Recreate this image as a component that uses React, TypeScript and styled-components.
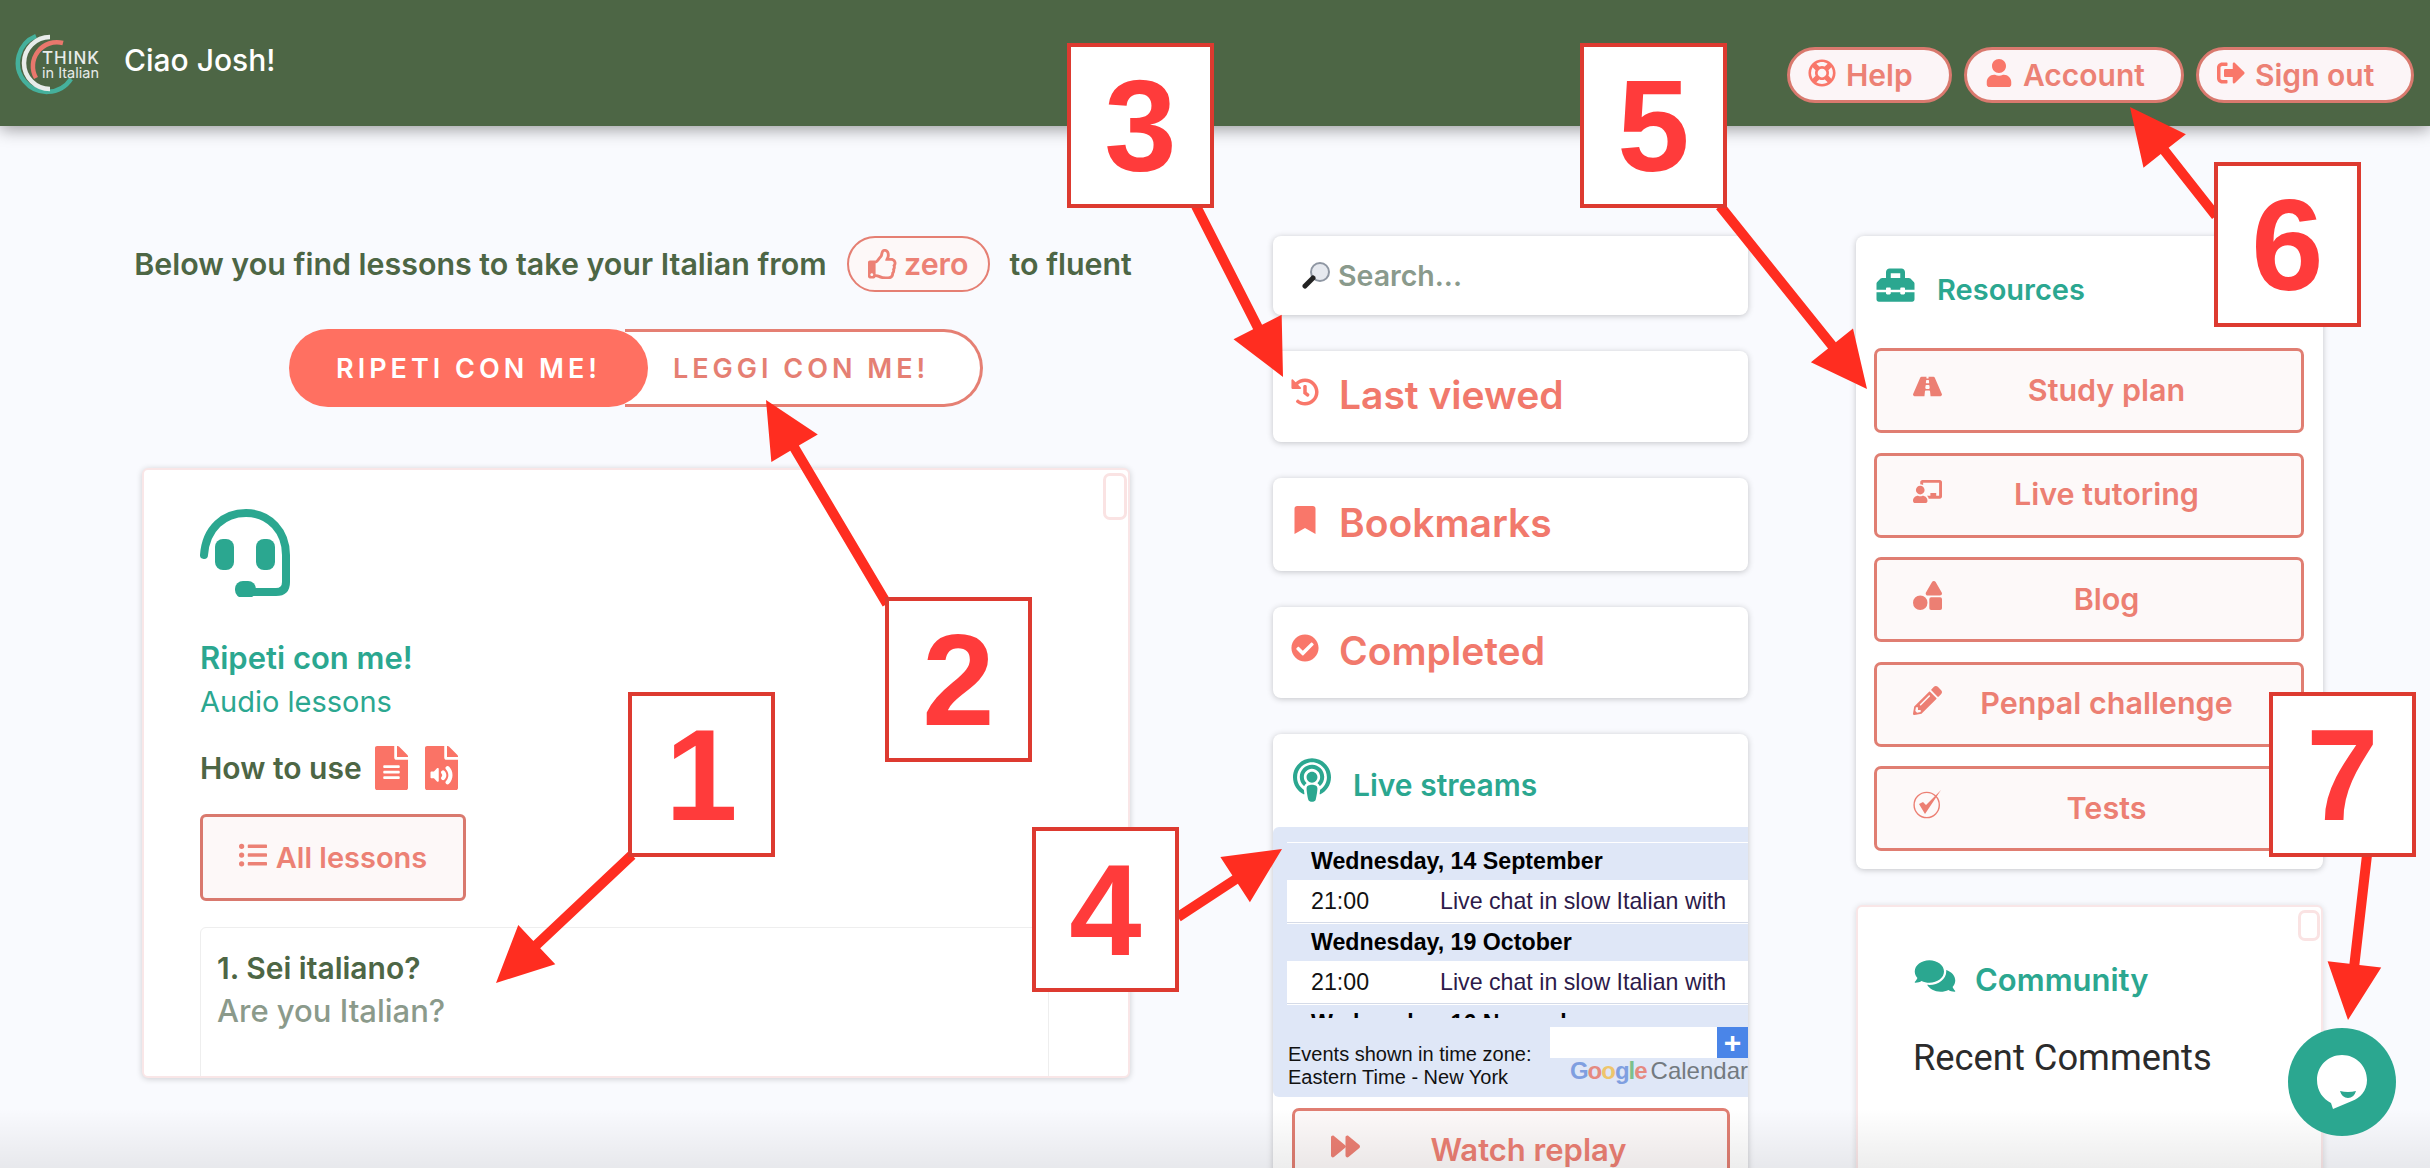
import styled, { createGlobalStyle } from "styled-components";
import {
  FaBookmark,
  FaChalkboardTeacher,
  FaCheckCircle,
  FaComments,
  FaFileAlt,
  FaFileAudio,
  FaForward,
  FaHistory,
  FaListUl,
  FaPencilAlt,
  FaPodcast,
  FaRegLifeRing,
  FaRegThumbsUp,
  FaRoad,
  FaShapes,
  FaSignOutAlt,
  FaToolbox,
  FaUser,
} from "react-icons/fa";

const GlobalStyle = createGlobalStyle`
  html, body {
    margin: 0;
    padding: 0;
    background: #f9fafe;
    font-family: Inter, "Liberation Sans", sans-serif;
  }
  * {
    box-sizing: border-box;
  }
`;

const Page = styled.div`
  position: relative;
  width: 2430px;
  height: 1168px;
  overflow: hidden;
  background: #f9fafe;
`;

const Header = styled.header`
  display: flex;
  justify-content: space-between;
  align-items: flex-start;
  height: 126px;
  background: #4d6645;
  box-shadow: 0 3px 16px rgba(0, 0, 0, 0.4);
  position: relative;
  z-index: 1;
`;

const Brand = styled.div`
  display: flex;
  align-items: flex-start;
  gap: 20px;
  padding: 30px 0 0 14px;
`;

const Greeting = styled.div`
  color: #ffffff;
  font-size: 30px;
  font-weight: 500;
  line-height: 36px;
  margin-top: 12px;
`;

const HeaderNav = styled.nav`
  display: flex;
  gap: 12px;
  padding: 47px 16px 0 0;
`;

const NavPill = styled.div<{ $width: number }>`
  display: flex;
  align-items: center;
  gap: 10px;
  width: ${(p) => p.$width}px;
  height: 56px;
  padding-left: 18px;
  border: 3px solid #d9796e;
  border-radius: 28px;
  background: #fcf5f7;
  color: #ec8175;
  font-size: 30px;
  font-weight: 600;
  svg {
    flex: none;
    font-size: 28px;
    color: #f9776a;
    margin-top: -4px;
  }
`;

const Main = styled.main`
  display: flex;
  align-items: flex-start;
  padding: 110px 0 0 142px;
`;

const LeftColumn = styled.section`
  display: flex;
  flex-direction: column;
  align-items: center;
  width: 988px;
  margin-right: 143px;
`;

const Tagline = styled.div`
  display: flex;
  align-items: center;
  gap: 20px;
  height: 56px;
  margin-left: -6px;
  color: #4d6645;
  font-size: 30.4px;
  font-weight: 600;
  white-space: nowrap;
`;

const ZeroPill = styled.span`
  display: inline-flex;
  align-items: center;
  justify-content: center;
  gap: 6px;
  width: 143px;
  height: 56px;
  border: 2px solid #e57f73;
  border-radius: 28px;
  color: #ec8175;
  background: #fdf8f8;
`;

const Toggle = styled.div`
  display: flex;
  width: 694px;
  height: 78px;
  margin-top: 37px;
`;

const ToggleOn = styled.div`
  position: relative;
  z-index: 1;
  display: flex;
  align-items: center;
  justify-content: center;
  width: 359px;
  border-radius: 39px;
  background: #ff7061;
  color: #ffffff;
  font-size: 27px;
  font-weight: 600;
  letter-spacing: 4px;
`;

const ToggleOff = styled.div`
  display: flex;
  align-items: center;
  width: 358px;
  margin-left: -23px;
  padding-left: 48px;
  border: 3px solid #e57f73;
  border-left: none;
  border-radius: 0 39px 39px 0;
  background: #ffffff;
  color: #e57f73;
  font-size: 27px;
  font-weight: 600;
  letter-spacing: 4px;
`;

const LessonCard = styled.div`
  position: relative;
  width: 988px;
  height: 610px;
  margin-top: 61px;
  padding: 35px 56px 0;
  overflow: hidden;
  background: #ffffff;
  border: 2px solid #f9e6e7;
  border-radius: 6px;
  box-shadow: 0 1px 6px rgba(0, 0, 0, 0.18);
`;

const CornerBox = styled.div<{ $w: number; $h: number }>`
  position: absolute;
  top: 3px;
  right: 1px;
  width: ${(p) => p.$w}px;
  height: ${(p) => p.$h}px;
  border: 3px solid #fae3e3;
  border-radius: 7px;
  background: #ffffff;
`;

const CardTitle = styled.div`
  margin-top: 35px;
  color: #2ba790;
  font-size: 31px;
  font-weight: 600;
  line-height: 44px;
`;

const CardSub = styled.div`
  color: #2ba790;
  font-size: 29px;
  font-weight: 400;
  line-height: 44px;
`;

const HowTo = styled.div`
  display: flex;
  align-items: center;
  gap: 13px;
  height: 44px;
  margin-top: 22px;
  color: #4d6645;
  font-size: 30px;
  font-weight: 600;
  svg {
    width: 33px;
    height: 44px;
    color: #fa7366;
  }
`;

const HowToIcons = styled.span`
  display: flex;
  gap: 17px;
`;

const AllLessons = styled.div`
  display: flex;
  align-items: center;
  justify-content: center;
  gap: 9px;
  width: 266px;
  height: 87px;
  margin-top: 24px;
  border: 3px solid #d9796e;
  border-radius: 6px;
  background: #fdf8f8;
  color: #ec8175;
  font-size: 29px;
  font-weight: 600;
  svg {
    font-size: 28px;
    margin-top: -6px;
  }
`;

const LessonRow = styled.div`
  width: 849px;
  height: 200px;
  margin-top: 26px;
  padding: 19px 16px 0;
  border: 1px solid #eeeeee;
  border-radius: 6px;
`;

const LessonName = styled.div`
  color: #4d6645;
  font-size: 30px;
  font-weight: 600;
  line-height: 42px;
`;

const LessonGloss = styled.div`
  color: #8b9a8b;
  font-size: 31px;
  font-weight: 500;
  line-height: 44px;
`;

const MiddleColumn = styled.section`
  display: flex;
  flex-direction: column;
  gap: 36px;
  width: 475px;
  margin-right: 108px;
`;

const SideCard = styled.div<{ $h?: number }>`
  ${(p) => (p.$h ? `height: ${p.$h}px;` : "")}
  background: #ffffff;
  border-radius: 8px;
  box-shadow: 0 1px 6px rgba(0, 0, 0, 0.22);
`;

const SearchBar = styled(SideCard)`
  display: flex;
  align-items: center;
  gap: 8px;
  padding-left: 29px;
  color: #8a9a8c;
  font-size: 28.5px;
  font-weight: 600;
`;

const ShortcutCard = styled(SideCard)`
  display: flex;
  align-items: center;
  padding: 0 0 4px 18px;
  color: #f1796c;
  font-size: 39px;
  font-weight: 600;
  svg {
    flex: none;
    width: 28px;
    height: 28px;
    margin: -6px 20px 0 0;
    color: #f9776a;
  }
`;

const PanelHead = styled.div`
  display: flex;
  align-items: center;
  color: #2ba790;
  font-weight: 600;
`;

const LiveHead = styled(PanelHead)`
  height: 93px;
  padding: 8px 0 0 20px;
  gap: 22px;
  font-size: 30px;
  svg {
    width: 38px;
    height: 44px;
    margin-top: -10px;
  }
`;

const CalendarFrame = styled.div`
  height: 270px;
  padding: 15px 0 0 14px;
  background: #dfe7f7;
  border-radius: 6px 0 0 6px;
  font-family: "Liberation Sans", Arial, sans-serif;
`;

const EventList = styled.div`
  height: 176px;
  overflow: hidden;
`;

const DateRow = styled.div`
  display: flex;
  align-items: center;
  height: 38px;
  padding-left: 24px;
  border-top: 1px solid #ffffff;
  color: #000000;
  font-size: 23.2px;
  font-weight: 700;
  white-space: nowrap;
`;

const EventRow = styled.div`
  display: flex;
  align-items: center;
  height: 43px;
  padding-left: 24px;
  background: #ffffff;
  border-bottom: 1px solid #d5dbe8;
  font-size: 23.2px;
  white-space: nowrap;
`;

const EventTime = styled.span`
  width: 129px;
  color: #111111;
`;

const EventName = styled.span`
  color: #2d1a4a;
`;

const CalendarFoot = styled.div`
  display: flex;
  justify-content: space-between;
  padding-left: 1px;
`;

const TimeZone = styled.div`
  margin-top: 25px;
  color: #111111;
  font-size: 20px;
  line-height: 23px;
  white-space: nowrap;
`;

const SubscribeBlock = styled.div`
  width: 198px;
  margin-top: 9px;
`;

const SubscribeBar = styled.div`
  display: flex;
  justify-content: flex-end;
  height: 31px;
  background: #ffffff;
`;

const PlusButton = styled.div`
  display: flex;
  align-items: center;
  justify-content: center;
  width: 31px;
  background: #4a85e8;
  color: #ffffff;
  font-size: 30px;
  font-weight: 700;
  line-height: 1;
`;

const GoogleMark = styled.div`
  display: flex;
  justify-content: flex-end;
  gap: 4px;
  font-size: 24px;
  line-height: 26px;
  color: #737a80;
  white-space: nowrap;
`;

const GLetter = styled.span<{ $c: string }>`
  color: ${(p) => p.$c};
  font-weight: 700;
  letter-spacing: -1px;
`;

const LinkButton = styled.div`
  display: flex;
  align-items: center;
  height: 85px;
  padding: 0 30px 0 36px;
  border: 3px solid #e07e72;
  border-radius: 7px;
  background: #fdf9f9;
  color: #ec7f73;
  font-size: 30.5px;
  font-weight: 600;
  svg {
    flex: none;
    width: 29px;
    height: 29px;
    margin-top: -8px;
  }
`;

const LinkLabel = styled.span`
  flex: 1;
  margin-top: -3px;
  text-align: center;
`;

const ReplayButton = styled(LinkButton)`
  margin: 11px 18px 0 19px;
  font-size: 31px;
`;

const RightColumn = styled.section`
  display: flex;
  flex-direction: column;
  gap: 36px;
  width: 467px;
`;

const ResourcesCard = styled(SideCard)`
  height: 633px;
  padding: 0 19px 0 18px;
`;

const ResourcesHead = styled(PanelHead)`
  height: 106px;
  margin-bottom: 6px;
  gap: 20px;
  font-size: 29px;
  svg {
    width: 43px;
    height: 38px;
    margin-top: -8px;
  }
`;

const ResourceList = styled.div`
  display: flex;
  flex-direction: column;
  gap: 19.5px;
`;

const CommunityCard = styled.div`
  position: relative;
  height: 300px;
  padding: 54px 0 0 55px;
  background: #ffffff;
  border: 2px solid #f9e6e7;
  border-radius: 6px;
  box-shadow: 0 1px 6px rgba(0, 0, 0, 0.14);
`;

const CommunityHead = styled(PanelHead)`
  gap: 18px;
  font-size: 31px;
  svg {
    width: 44px;
    height: 36px;
    margin-top: -8px;
  }
`;

const RecentComments = styled.div`
  margin-top: 38px;
  color: #2b2b2b;
  font-family: Roboto, "Liberation Sans", sans-serif;
  font-size: 36.3px;
  line-height: 44px;
`;

const ChatBubble = styled.div`
  position: absolute;
  left: 2288px;
  top: 1028px;
  z-index: 3;
  display: flex;
  align-items: center;
  justify-content: center;
  width: 108px;
  height: 108px;
  border-radius: 50%;
  background: #2ba790;
`;

const BottomFade = styled.div`
  position: absolute;
  left: 0;
  right: 0;
  bottom: 0;
  height: 60px;
  z-index: 2;
  pointer-events: none;
  background: linear-gradient(rgba(0, 0, 0, 0), rgba(0, 0, 0, 0.07));
`;

const CalloutBox = styled.div<{ $x: number; $y: number }>`
  position: absolute;
  left: ${(p) => p.$x}px;
  top: ${(p) => p.$y}px;
  z-index: 5;
  display: flex;
  align-items: center;
  justify-content: center;
  width: 147px;
  height: 165px;
  border: 4px solid #dd3a30;
  background: #ffffff;
  color: #ff3b3b;
  font-family: "Liberation Sans", Arial, sans-serif;
  font-size: 130px;
  font-weight: 700;
  line-height: 1;
`;

const ArrowLayer = styled.svg`
  position: absolute;
  left: 0;
  top: 0;
  z-index: 4;
  pointer-events: none;
`;

type Point = [number, number];

function arrowPoints(tail: Point, tip: Point): string {
  const dx = tip[0] - tail[0];
  const dy = tip[1] - tail[1];
  const len = Math.hypot(dx, dy);
  const ux = dx / len;
  const uy = dy / len;
  const nx = -uy;
  const ny = ux;
  const headLen = 56;
  const headHalf = 27;
  const shaftHalf = 5;
  const bx = tip[0] - ux * headLen;
  const by = tip[1] - uy * headLen;
  const pts: Point[] = [
    [tail[0] + nx * shaftHalf, tail[1] + ny * shaftHalf],
    [bx + nx * shaftHalf, by + ny * shaftHalf],
    [bx + nx * headHalf, by + ny * headHalf],
    tip,
    [bx - nx * headHalf, by - ny * headHalf],
    [bx - nx * shaftHalf, by - ny * shaftHalf],
    [tail[0] - nx * shaftHalf, tail[1] - ny * shaftHalf],
  ];
  return pts.map((p) => p.join(",")).join(" ");
}

const callouts = [
  { n: 1, x: 628, y: 692 },
  { n: 2, x: 885, y: 597 },
  { n: 3, x: 1067, y: 43 },
  { n: 4, x: 1032, y: 827 },
  { n: 5, x: 1580, y: 43 },
  { n: 6, x: 2214, y: 162 },
  { n: 7, x: 2269, y: 692 },
];

const arrows: { tail: Point; tip: Point }[] = [
  { tail: [632, 855], tip: [496, 983] },
  { tail: [887, 604], tip: [766, 400] },
  { tail: [1196, 206], tip: [1283, 377] },
  { tail: [1178, 917], tip: [1282, 849] },
  { tail: [1720, 206], tip: [1867, 389] },
  { tail: [2216, 216], tip: [2130, 107] },
  { tail: [2367, 855], tip: [2348, 1020] },
];

function TestsIcon() {
  return (
    <svg viewBox="0 0 29 29" fill="none">
      <circle cx="13.7" cy="15" r="12.6" stroke="currentColor" strokeWidth="1.4" />
      <path d="M6 14 L12 24 L28 0 L13 15 L10 12 Z" fill="currentColor" />
    </svg>
  );
}

const resources = [
  { label: "Study plan", icon: <FaRoad /> },
  { label: "Live tutoring", icon: <FaChalkboardTeacher /> },
  { label: "Blog", icon: <FaShapes /> },
  { label: "Penpal challenge", icon: <FaPencilAlt /> },
  { label: "Tests", icon: <TestsIcon /> },
];

function Logo() {
  return (
    <svg width="90" height="66" viewBox="0 0 90 66" fill="none">
      <path d="M57 49 A29 29 0 1 1 22 6" stroke="#45b09c" strokeWidth="4.5" />
      <path d="M36 59 A26 26 0 1 1 36 7" stroke="#e8ecea" strokeWidth="4.5" />
      <path d="M22 48 A24 24 0 0 1 49 13" stroke="#e9776c" strokeWidth="4.5" />
      <text x="28" y="34" fill="#e8ecea" fontFamily="Inter, sans-serif" fontSize="17" fontWeight="500" letterSpacing="1">
        THINK
      </text>
      <text x="28" y="48" fill="#e8ecea" fontFamily="Inter, sans-serif" fontSize="14.5" fontWeight="400">
        in Italian
      </text>
    </svg>
  );
}

function HeadsetIcon() {
  return (
    <svg width="92" height="92" viewBox="10 5 92 92" fill="none">
      <path
        d="M14 55 C16 28 34 13 56 13 C80 13 96 32 96 55 L96 82 Q96 92 86 92 L60 92"
        stroke="#2ba790"
        strokeWidth="8"
        strokeLinecap="round"
      />
      <rect x="25" y="39" width="19" height="31" rx="8" fill="#2ba790" />
      <rect x="66" y="39" width="19" height="31" rx="8" fill="#2ba790" />
      <rect x="45" y="81" width="21" height="17" rx="8" fill="#2ba790" />
    </svg>
  );
}

function MagnifierIcon() {
  return (
    <svg width="28" height="30" viewBox="0 0 28 30">
      <circle cx="18" cy="11" r="9" fill="#e6e9ef" stroke="#8f97a3" strokeWidth="2" />
      <path d="M11 17 L3 25" stroke="#222222" strokeWidth="5" strokeLinecap="round" />
    </svg>
  );
}

function ChatIcon() {
  return (
    <svg width="52" height="56" viewBox="0 0 52 56">
      <path
        d="M26 1 C40 1 51 12 51 26 C51 37 44 44 36 47 L17 55 L15 49 C7 45 1 37 1 26 C1 12 12 1 26 1 Z"
        fill="#ffffff"
      />
      <path d="M24 37 Q32 39 40 37 Q38 44 32 44 Q26 44 24 37 Z" fill="#2ba790" />
    </svg>
  );
}

export default function App() {
  return (
    <Page>
      <GlobalStyle />
      <Header>
        <Brand>
          <Logo />
          <Greeting>Ciao Josh!</Greeting>
        </Brand>
        <HeaderNav>
          <NavPill $width={165}>
            <FaRegLifeRing />
            Help
          </NavPill>
          <NavPill $width={220}>
            <FaUser />
            Account
          </NavPill>
          <NavPill $width={218}>
            <FaSignOutAlt />
            Sign out
          </NavPill>
        </HeaderNav>
      </Header>

      <Main>
        <LeftColumn>
          <Tagline>
            <span>Below you find lessons to take your Italian from</span>
            <ZeroPill>
              <FaRegThumbsUp />
              zero
            </ZeroPill>
            <span>to fluent</span>
          </Tagline>
          <Toggle>
            <ToggleOn>RIPETI CON ME!</ToggleOn>
            <ToggleOff>LEGGI CON ME!</ToggleOff>
          </Toggle>
          <LessonCard>
            <CornerBox $w={24} $h={47} />
            <HeadsetIcon />
            <CardTitle>Ripeti con me!</CardTitle>
            <CardSub>Audio lessons</CardSub>
            <HowTo>
              How to use
              <HowToIcons>
                <FaFileAlt />
                <FaFileAudio />
              </HowToIcons>
            </HowTo>
            <AllLessons>
              <FaListUl />
              All lessons
            </AllLessons>
            <LessonRow>
              <LessonName>1. Sei italiano?</LessonName>
              <LessonGloss>Are you Italian?</LessonGloss>
            </LessonRow>
          </LessonCard>
        </LeftColumn>

        <MiddleColumn>
          <SearchBar $h={79}>
            <MagnifierIcon />
            Search...
          </SearchBar>
          <ShortcutCard $h={91}>
            <FaHistory />
            Last viewed
          </ShortcutCard>
          <ShortcutCard $h={93}>
            <FaBookmark />
            Bookmarks
          </ShortcutCard>
          <ShortcutCard $h={91}>
            <FaCheckCircle />
            Completed
          </ShortcutCard>
          <SideCard>
            <LiveHead>
              <FaPodcast />
              Live streams
            </LiveHead>
            <CalendarFrame>
              <EventList>
                <DateRow>Wednesday, 14 September</DateRow>
                <EventRow>
                  <EventTime>21:00</EventTime>
                  <EventName>Live chat in slow Italian with</EventName>
                </EventRow>
                <DateRow>Wednesday, 19 October</DateRow>
                <EventRow>
                  <EventTime>21:00</EventTime>
                  <EventName>Live chat in slow Italian with</EventName>
                </EventRow>
                <DateRow>Wednesday, 16 November</DateRow>
              </EventList>
              <CalendarFoot>
                <TimeZone>
                  Events shown in time zone:
                  <br />
                  Eastern Time - New York
                </TimeZone>
                <SubscribeBlock>
                  <SubscribeBar>
                    <PlusButton>+</PlusButton>
                  </SubscribeBar>
                  <GoogleMark>
                    <span>
                      <GLetter $c="#7f9fe0">G</GLetter>
                      <GLetter $c="#e58a80">o</GLetter>
                      <GLetter $c="#eec56c">o</GLetter>
                      <GLetter $c="#7f9fe0">g</GLetter>
                      <GLetter $c="#7cc08c">l</GLetter>
                      <GLetter $c="#e58a80">e</GLetter>
                    </span>
                    <span>Calendar</span>
                  </GoogleMark>
                </SubscribeBlock>
              </CalendarFoot>
            </CalendarFrame>
            <ReplayButton>
              <FaForward />
              <LinkLabel>Watch replay</LinkLabel>
            </ReplayButton>
          </SideCard>
        </MiddleColumn>

        <RightColumn>
          <ResourcesCard>
            <ResourcesHead>
              <FaToolbox />
              Resources
            </ResourcesHead>
            <ResourceList>
              {resources.map((r) => (
                <LinkButton key={r.label}>
                  {r.icon}
                  <LinkLabel>{r.label}</LinkLabel>
                </LinkButton>
              ))}
            </ResourceList>
          </ResourcesCard>
          <CommunityCard>
            <CornerBox $w={22} $h={31} />
            <CommunityHead>
              <FaComments />
              Community
            </CommunityHead>
            <RecentComments>Recent Comments</RecentComments>
          </CommunityCard>
        </RightColumn>
      </Main>

      <BottomFade />
      <ChatBubble>
        <ChatIcon />
      </ChatBubble>

      <ArrowLayer width="2430" height="1168">
        {arrows.map((a, i) => (
          <polygon key={i} points={arrowPoints(a.tail, a.tip)} fill="#ff2d20" />
        ))}
      </ArrowLayer>
      {callouts.map((c) => (
        <CalloutBox key={c.n} $x={c.x} $y={c.y}>
          {c.n}
        </CalloutBox>
      ))}
    </Page>
  );
}
